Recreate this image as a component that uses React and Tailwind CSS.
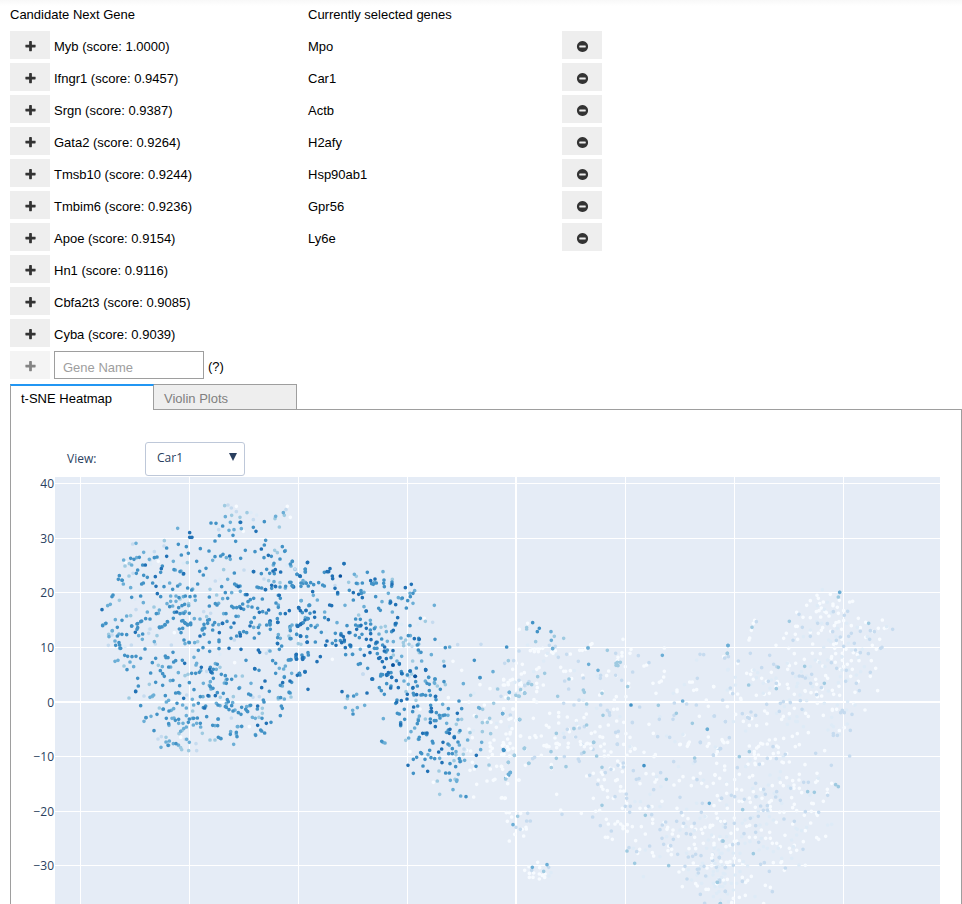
import { useState } from "react";

const CANDIDATES = [
  ["Myb", "1.0000"],
  ["Ifngr1", "0.9457"],
  ["Srgn", "0.9387"],
  ["Gata2", "0.9264"],
  ["Tmsb10", "0.9244"],
  ["Tmbim6", "0.9236"],
  ["Apoe", "0.9154"],
  ["Hn1", "0.9116"],
  ["Cbfa2t3", "0.9085"],
  ["Cyba", "0.9039"],
];

const SELECTED = ["Mpo", "Car1", "Actb", "H2afy", "Hsp90ab1", "Gpr56", "Ly6e"];

// Sequential "Blues" scale, lowest expression first.
const BLUES = ["#f7fbff", "#deebf7", "#c6dbef", "#9ecae1", "#6baed6", "#4292c6", "#2171b5", "#08519c"];

// Cells are stored in tiles. Each tile has an origin in plot units and lists of
// x,y pairs (a third of a unit each) keyed by expression level.
const TILES = [
  {
    x: 90,
    y: 490,
    levels: {
      0: "439,49 592,49 601,82 460,124 205,214 107,217",
      1: "483,68 182,222 135,328 150,300 351,265 280,220 398,104 500,75 210,275 390,268 180,416 590,225",
      2: "414,45 424,54 439,65 588,59 490,89 386,119 128,162 193,185 222,168 462,240 522,267 376,273 341,365 138,359 129,250 362,370 180,210 556,80",
      3: "404,47 471,68 425,76 450,82 568,111 555,86 583,76 223,152 292,218 105,228 117,258 401,239 360,298 122,377 192,351 296,341 562,188 570,278 88,331 554,181 118,221 350,380 380,315 536,272 270,327",
      4: "406,80 421,97 263,115 417,121 432,119 454,116 557,79 580,68 138,160 161,187 178,208 101,210 250,214 140,203 125,225 368,211 409,203 421,208 273,243 280,320 239,279 160,338 53,347 61,343 110,378 76,389 172,366 231,341 258,334 242,334 258,318 316,331 296,347 386,340 398,326 425,308 413,268 451,304 586,182 603,228 615,238 633,332 645,238 248,348 278,369 313,386 386,404 401,371 445,379 474,349 509,405 541,402 565,345 586,294 550,225 256,240 308,297 205,370 46,401 38,405 95,270 122,293 270,283 286,365 233,396 330,387 218,410 552,275 208,360 100,282 242,318 491,412 340,414 646,383 620,405 656,347 440,285",
      5: "363,99 378,100 398,108 388,137 429,136 437,154 375,153 450,97 490,112 523,95 527,151 523,165 495,185 466,181 452,205 265,163 289,170 230,174 331,176 274,195 295,190 320,214 357,183 375,200 392,198 399,193 201,201 193,203 148,202 122,205 132,208 158,225 143,240 139,250 161,256 172,262 212,247 217,228 88,257 85,268 97,271 155,282 160,279 188,279 222,290 252,239 270,245 280,252 340,255 329,244 348,235 323,282 305,300 263,288 248,298 293,294 395,290 413,325 433,249 434,282 439,287 450,288 490,245 501,291 506,293 515,294 517,327 527,299 530,238 539,250 553,251 514,251 491,325 481,329 474,335 458,342 449,350 440,353 425,349 430,353 406,308 381,345 376,341 358,321 358,348 315,318 300,320 286,318 267,323 284,343 276,347 266,353 298,370 282,370 270,371 253,367 275,393 286,400 292,403 250,385 225,405 214,411 209,413 180,387 167,386 152,395 141,402 143,413 125,408 96,391 69,315 66,320 125,322 152,318 212,320 199,371 239,350 302,404 342,403 353,391 358,389 369,405 411,394 408,371 438,379 461,358 486,351 503,355 518,365 529,369 541,393 540,405 558,339 565,352 562,386 571,371 545,295 557,290 570,291 571,325 565,316 587,289 599,277 606,287 611,291 621,253 633,289 646,245 655,288 570,207 552,220 577,170 584,184 601,222 607,214 544,199 522,203 483,397 493,383 466,314 505,412 337,417 278,415 268,417 600,410 653,386 640,280 658,345 626,354 660,370",
      6: "299,128 299,142 306,142 452,97 498,124 514,177 535,196 230,199 419,198 166,225 214,236 196,260 198,289 202,311 281,251 445,290 471,314 491,245 526,299 545,286 549,243 556,239 572,246 568,316 536,360 508,367 586,371 540,393 563,397 598,362 631,259 653,217 626,353 36,359 260,366 398,400 432,399 453,355 645,390 631,404 623,408 610,290 556,289 480,408 654,386",
    },
  },
  {
    x: 90,
    y: 620,
    levels: {
      0: "253,38 434,128 478,320 272,352",
      1: "105,80 390,103 535,95 351,158 176,28",
      2: "55,76 124,75 66,45 176,40 180,27 196,72 244,75 529,100 537,91 162,228 290,225 489,232 424,294 204,357 214,350 267,377 320,392 318,371 286,358 433,60 350,154 508,230",
      3: "56,43 66,33 201,47 102,138 178,193 117,234 285,167 294,163 205,136 390,142 407,180 457,168 208,264 187,230 323,65 276,332 272,383 275,389 296,392 360,360 375,360 337,340 267,341 507,292 517,280 597,48 603,231 308,273 391,232 430,230 92,85 565,237 409,257 455,320 228,352 517,265 625,71",
      4: "67,32 87,42 57,50 75,63 89,85 146,47 193,65 157,58 285,71 296,67 314,68 312,112 120,126 131,140 75,124 84,121 217,140 265,158 242,141 241,182 318,135 332,152 340,190 320,130 361,185 358,196 379,148 403,189 376,131 363,207 483,190 449,203 597,120 568,145 583,170 586,138 581,147 577,198 597,216 601,219 583,237 565,233 540,93 428,248 339,230 311,255 289,264 278,255 251,266 252,294 237,316 219,268 229,246 180,232 183,289 162,304 168,293 187,228 236,241 244,271 279,310 266,310 289,321 281,326 272,334 320,310 332,321 375,317 385,297 390,257 470,260 470,272 479,257 496,295 487,292 442,320 444,320 422,335 439,342 496,344 431,373 391,355 213,382 228,366 238,363 250,371 236,376 290,358 298,367 265,375 289,287 310,315 246,295 307,295 307,238 269,220 191,225 379,250 409,250 437,168 435,270 565,44 571,55 600,24",
      5: "38,17 48,10 82,22 125,18 141,28 143,11 155,3 158,42 110,44 96,43 82,48 87,68 77,76 89,75 92,85 165,87 104,106 113,109 126,110 138,109 152,115 111,149 143,175 145,198 137,213 152,257 168,293 201,283 187,128 182,159 197,187 197,115 226,108 228,113 234,113 249,97 251,126 257,122 277,121 236,141 211,152 218,161 223,169 249,181 269,197 265,218 257,219 298,188 218,196 328,157 317,160 305,160 325,91 339,83 359,94 387,86 358,67 387,60 387,65 423,55 440,48 449,38 461,35 470,38 493,54 507,40 484,7 530,15 539,8 541,28 423,22 344,24 337,30 342,43 368,30 374,8 353,10 302,9 293,15 284,8 279,2 232,5 225,14 208,21 273,38 282,60 298,68 468,121 382,133 361,142 370,148 362,155 367,159 370,175 394,163 406,167 425,178 409,190 361,200 369,205 382,218 400,220 357,228 312,209 331,230 325,250 347,258 384,255 412,239 415,245 425,257 409,262 406,260 417,269 429,273 445,278 455,262 453,283 467,268 473,275 482,256 350,290 340,263 322,294 311,295 298,297 295,307 266,298 256,301 229,295 237,273 220,267 226,227 261,250 236,311 368,316 383,317 331,310 384,297 385,352 393,356 441,350 439,337 455,319 421,343 497,346 512,330 524,339 543,307 571,287 577,265 574,258 520,240 522,246 538,214 548,122 557,130 595,120 602,119 557,160 583,172 605,187 598,218 572,233 571,196 476,222 482,225 447,205 409,190 411,178 516,295 502,267 495,147 507,151 192,332 234,376 258,371 515,333 568,88 575,78 562,70 563,53 600,56 637,115 650,50 653,26 618,112 630,165 654,98",
      6: "397,10 388,38 451,48 451,44 330,48 453,88 417,85 509,97 564,7 136,37 284,130 334,142 359,148 364,157 137,215 354,227 376,227 344,264 281,235 503,258 503,316 529,310 525,183 515,203 494,146 578,188 600,183 619,103 619,117 638,118 645,155 651,67 628,160 654,208 636,10 622,18 632,48 563,71 505,90",
    },
  },
  {
    x: 290,
    y: 550,
    levels: {
      0: "403,205 489,334 515,361 127,328",
      1: "384,222 290,237 108,245 335,223 450,280 137,115",
      2: "15,57 135,107 366,289 428,217 503,284 573,283 219,372 357,380",
      3: "176,97 199,79 307,88 273,232 406,214 341,287 340,278 310,315 33,283 206,195 461,334 286,229 388,308 368,333 357,283 365,372 347,270",
      4: "193,73 203,101 222,127 279,65 295,130 276,155 325,143 374,122 369,160 307,186 334,146 433,166 424,314 479,291 570,383 82,150 70,136 34,152 104,186 141,218 46,97 39,92 165,166 6,225 82,226 256,232 211,298 241,211 289,245 386,269 361,257 267,252 321,333 333,264 395,333 416,382 435,387 361,363 5,370 292,274 310,275 360,130 222,170 214,130 187,313 335,319 386,282 20,253 253,97",
      5: "7,34 46,57 46,66 21,73 30,78 33,99 49,100 62,98 71,104 86,98 98,105 103,108 103,67 162,41 232,67 217,99 199,100 178,121 190,150 213,122 214,130 257,140 245,101 250,103 259,99 282,90 281,100 283,110 306,96 305,109 337,144 361,140 369,130 353,152 349,174 301,153 300,160 266,175 271,181 228,183 143,132 59,166 8,108 3,97 37,188 40,218 48,182 63,227 76,232 53,206 104,203 94,247 136,250 153,251 171,227 180,248 197,207 211,208 211,228 197,225 205,228 227,220 242,222 253,236 241,240 216,253 208,263 196,256 262,277 257,281 253,295 261,295 236,289 278,285 292,300 288,306 275,267 305,245 319,220 316,225 360,227 355,257 386,265 385,300 393,307 382,285 435,268 466,293 391,205 407,359 379,354 337,371 361,363 334,365 273,373 294,374 303,368 233,355 211,341 205,343 167,314 182,290 179,285 163,275 151,272 137,272 127,280 76,276 20,253 32,259 3,266 1,242 42,323 36,315 18,322 3,329 55,315 28,371 45,365 262,311 268,325 303,323 328,343 246,387 188,313 553,331",
      6: "52,38 120,56 116,65 111,65 127,78 128,86 135,115 143,128 68,125 48,181 30,78 31,258 190,128 206,133 217,143 242,92 255,87 162,41 346,113 364,103 306,103 317,164 302,157 229,183 119,165 125,167 73,186 74,202 115,209 111,273 107,286 138,286 26,173 31,182 32,222 24,229 52,276 160,260 153,255 155,278 163,270 166,293 182,286 200,238 213,226 229,235 229,268 242,251 243,269 259,277 238,288 240,308 223,316 284,291 283,303 310,241 309,302 323,203 316,221 373,266 388,268 463,348 18,315 20,327 38,323 38,327 91,320 81,335 266,325 270,323 289,326 277,335 283,352 309,345 328,341 290,376 305,382 407,359 22,376 45,366 248,387 177,248",
      7: "151,78 309,345 375,379",
    },
  },
  {
    x: 330,
    y: 670,
    levels: {
      0: "417,96 355,83 270,117 240,245 310,337 450,44 541,31 535,44 521,30 574,12 583,8 480,56 433,137 467,152 499,172 483,157 480,219 492,210 520,218 533,207 541,187 537,148 549,117 521,132 417,177 427,203 481,230 481,243 515,254 487,254 475,262 481,297 500,289 514,289 518,298 420,301 427,277 433,297 490,331 495,328 471,333 440,343 431,381 516,383 526,384 533,341 566,330 574,45 557,152 571,198 487,235 463,105 524,45 537,238 549,235 422,243 410,241 569,44",
      1: "500,55 430,182 408,207 500,160 405,240 539,170 432,70",
      2: "99,12 513,79 585,47 402,237 597,40 541,135",
      3: "52,86 227,211 233,14 258,91 420,188 346,44 422,76 457,158 472,157 479,145 457,185 482,191 458,118 503,57 379,163 286,147 329,373 322,333 327,303 372,272 477,285 535,277 553,256 558,75 565,78 596,280 535,85 573,61 378,254 322,48 400,253 439,140 491,100 387,187 395,148 375,328 228,65",
      4: "80,73 46,113 104,106 82,113 68,121 222,33 235,43 286,33 315,27 314,40 400,41 338,103 384,149 350,160 268,138 265,208 236,204 243,185 254,174 265,147 337,137 354,136 349,187 372,202 388,225 413,210 378,245 329,265 294,254 361,331 380,334 369,359 385,313 446,113 455,217 452,239 404,271 392,378 489,5 538,67 527,325 541,307 569,149 584,235 584,69 392,273 358,226 160,146 165,219 381,330 449,115 159,217 313,38",
      5: "53,78 71,78 69,132 152,18 158,14 163,73 154,62 148,53 170,41 183,48 232,15 248,55 250,70 262,48 257,35 273,75 278,74 287,76 298,43 301,76 298,62 331,58 296,22 318,89 316,80 315,27 342,35 387,93 355,116 395,116 450,23 518,131 522,241 438,289 536,315 408,380 358,309 347,309 360,281 377,290 390,275 388,266 367,236 356,251 367,251 354,222 384,216 373,200 351,187 309,219 307,214 268,202 267,207 262,161 265,152 248,125 224,148 223,118 212,158 212,167 197,100 201,90 208,132 202,130 155,214 250,268 260,262 285,268 275,251 272,248 299,241 303,263 314,266 250,310 279,288 345,135 330,144 341,136 301,125 319,128 328,136 318,152 313,152 302,106 263,108 301,147 285,190 290,194 390,182 355,180 252,75 291,40",
      6: "36,65 111,69 126,27 170,14 175,8 185,22 199,32 205,53 182,54 215,11 240,3 287,1 249,53 232,73 231,87 214,92 260,74 251,111 305,125 301,158 316,170 278,190 291,189 304,115 293,304 234,286 326,246 335,237 339,217 360,178 358,190 373,203 382,130 439,256 336,278 212,163 317,79 200,97",
      7: "256,19",
    },
  },
  {
    x: 500,
    y: 600,
    levels: {
      0: "58,88 83,70 276,131 272,134 369,118 128,145 119,146 109,146 99,146 91,152 103,155 115,155 166,152 155,156 159,160 211,162 239,151 247,151 257,148 139,166 366,158 366,168 354,172 393,148 390,160 352,182 376,200 67,193 49,189 38,208 117,203 110,208 182,202 191,214 197,214 211,212 215,236 248,226 326,213 320,227 348,227 11,238 38,238 24,248 10,255 62,248 110,250 130,255 112,263 110,275 65,272 17,292 28,290 102,299 110,306 299,285 307,275 349,290 343,300 378,290 386,262 386,250 493,214 491,231 484,243 478,247 459,250 531,270 531,275 468,280 569,246 577,246 581,271 590,269 641,260 432,198 440,195 493,144 619,300 11,326 33,355 39,327 3,365 100,355 149,340 176,338 176,350 176,369 202,351 229,362 252,353 259,342 352,327 341,328 300,380 325,375 350,363 371,367 260,377 235,381 205,388 208,395 139,376 147,382 36,386 18,402 30,402 62,408 75,447 105,407 124,408 89,413 108,412 165,414 172,430 226,411 285,396 274,400 300,410 308,412 390,412 378,401 313,432 352,409 259,432 270,432 30,430 22,440 12,434 132,437 140,435 241,425 392,441 404,446 460,400 447,373 552,405 568,426 565,433 627,431 625,411 625,319 598,349 675,365 683,427 653,447 541,433 371,433 405,446",
      1: "83,135 131,183 142,160 101,215 45,247 223,212 292,228 520,280 553,254 683,210 590,180 480,350 500,408 549,403 646,441 525,425 50,280 170,165 250,300 75,255 230,370 390,440 260,320 360,350 290,325 640,350 190,400",
      2: "57,153 148,136 166,139 200,163 175,172 235,184 41,182 14,190 347,160 347,226 302,226 301,235 250,234 194,243 57,241 87,245 74,256 206,267 365,241 398,216 447,188 415,167 611,164 674,173 592,235 600,163 237,300 222,315 191,310 302,315 322,331 328,338 329,346 419,321 397,367 397,368 473,410 509,412 478,358 519,358 522,346 589,315 523,309 560,312 643,348 676,365 601,426 662,446 352,433 347,397 355,394 227,411 193,412 202,388 253,380 238,384 221,385 245,434 279,448",
      3: "80,83 80,87 107,125 163,109 191,115 158,145 25,182 134,220 113,230 95,254 84,251 62,269 74,280 58,289 48,286 25,295 173,289 207,237 250,270 253,277 306,280 260,312 309,346 59,358 222,386 260,375 281,427 169,400 348,190 352,187 361,187 354,197 322,151 383,260 475,316 529,340 577,370 622,387 682,160 73,446 348,196 264,143",
      4: "153,95 154,121 158,146 264,144 266,193 294,211 28,277 8,341 487,166 548,303 684,137 622,388",
      5: "98,68 118,85 112,95 20,141 393,315 10,449",
    },
  },
  {
    x: 500,
    y: 740,
    levels: {
      0: "7,17 24,30 168,11 170,23 178,14 205,10 204,22 147,20 140,20 124,46 76,76 154,74 154,86 243,14 253,20 262,10 273,25 302,19 313,33 333,36 313,48 325,47 404,27 391,34 381,46 432,37 466,44 462,50 353,63 360,72 340,88 331,85 347,122 352,119 367,95 363,80 374,76 304,97 308,103 280,100 260,108 295,120 313,119 305,140 309,148 322,152 362,140 361,153 371,153 380,190 367,205 340,175 323,172 280,175 420,131 438,101 460,102 470,118 465,126 538,122 549,110 522,135 580,114 539,14 562,19 565,11 622,19 601,100 645,106 674,90 605,130 574,137 621,140 486,184 531,205 420,205 437,205 456,200 458,238 458,250 424,260 436,282 362,252 369,259 382,254 345,252 353,245 369,266 382,274 397,260 325,252 319,238 299,211 287,214 244,220 182,210 170,163 57,120 14,175 4,174 19,218 28,218 62,220 22,244 35,231 79,267 71,288 28,303 44,283 67,268 78,262 113,367 87,380 74,391 88,400 101,399 119,383 118,402 135,402 88,412 99,412 118,417 134,412 127,406 316,292 323,292 337,298 407,302 419,328 413,340 457,338 461,348 506,318 504,332 515,328 514,344 567,326 535,289 517,282 519,270 503,262 501,268 492,248 549,259 564,236 575,260 604,268 615,262 587,268 584,292 608,280 630,262 638,256 617,230 548,226 537,396 550,388 547,440 587,431 592,438 580,369 618,448 625,448 655,418 621,384 663,365 638,365 587,326 583,313 610,310 640,290 678,320 659,297 5,80 20,110 12,43 29,48 680,160 660,180 650,70",
      1: "430,410 421,185 450,163 483,140 449,202 560,208 558,260 583,272 600,235 645,320 660,340 620,325 480,350 436,330 400,325 660,240 670,260 591,405 640,395 602,380 608,370 565,389 575,420 640,430 660,440 650,460 620,410 605,430 670,400 675,430 147,408 153,398 500,290 540,270 625,300 635,285 655,380 640,360 560,340 615,230 590,190 470,110 405,185 680,195 610,120 535,80 580,70 680,290 680,130 480,200",
      2: "238,64 235,57 193,50 98,56 104,52 245,41 352,12 354,76 370,69 370,81 333,88 316,98 269,106 293,133 400,92 409,118 417,116 482,98 521,65 641,45 654,32 601,8 585,64 591,119 461,149 540,172 445,199 455,224 376,199 391,199 389,217 380,175 379,162 345,170 278,231 186,223 301,257 334,273 80,243 91,243 48,262 61,268 83,220 146,382 95,391 387,323 410,335 449,318 480,269 487,255 497,246 486,295 491,313 520,298 512,317 530,244 551,250 544,218 572,283 559,281 583,250 604,217 607,190 665,175 662,244 676,251 533,343 565,351 578,349 587,343 603,347 638,343 592,388 597,387 595,399 617,408 658,353 638,362 561,417 555,379 612,379 676,383 659,426 676,454 601,463 614,490",
      3: "281,7 252,37 290,48 198,80 169,55 153,35 73,25 43,46 25,67 87,70 17,117 53,229 131,394 306,196 306,82 436,226 499,118 584,54 381,333 404,370 506,377 668,303 652,427 154,83 661,491 29,100",
      4: "31,98 39,254 97,382 141,374 628,190 25,103",
      5: "11,31 432,77",
    },
  },
  {
    x: 710,
    y: 580,
    levels: {
      0: "321,46 361,43 301,62 290,76 325,55 329,71 340,66 334,84 369,72 369,77 382,82 388,61 419,66 428,64 260,97 279,112 301,113 319,95 327,92 345,95 349,98 357,108 332,111 401,92 378,128 387,125 401,122 373,137 424,137 445,115 467,127 467,172 451,143 517,120 505,145 523,145 490,155 530,143 509,178 487,196 499,208 257,139 262,139 229,160 256,163 221,175 263,178 198,196 236,205 253,221 301,157 325,160 334,151 338,143 362,154 395,148 396,178 379,190 371,193 374,205 365,230 377,221 331,221 308,192 307,220 397,220 408,208 430,218 442,224 447,242 424,242 412,253 427,268 440,211 484,242 497,265 481,289 422,289 445,304 503,332 435,337 283,238 257,250 233,250 238,257 233,268 323,244 338,258 376,247 364,235 397,241 401,260 391,268 184,277 127,271 110,280 122,283 130,298 155,295 208,313 232,313 235,325 202,305 198,320 169,304 163,343 178,340 139,346 83,342 92,355 93,359 11,320 52,380 77,403 113,409 125,416 100,424 118,436 140,437 170,432 164,393 172,400 220,409 215,418 238,401 253,385 287,400 295,409 340,406 367,388 380,388 367,391 465,390 403,443 388,452 295,458 262,461 247,469 221,475 196,478 178,480 130,130 134,121 124,151 119,174 117,180 83,250 41,230 62,338 347,287 353,295 317,298 337,327 319,337 303,338 285,332 253,343 322,350 335,348 367,331 371,343 389,346 387,319 320,313 431,371 322,370 36,479 319,95 385,100 286,334",
      1: "337,29 352,67 322,77 343,88 364,98 335,130 320,125 352,130 382,145 410,130 362,185 341,202 356,180 280,170 301,150 396,230 378,170 442,142 472,170 415,190 425,210 457,208 445,232 463,260 452,275 415,270 353,240 328,247 345,260 301,260 274,275 316,240 232,250 257,290 263,310 270,345 238,360 290,362 343,370 435,375 410,390 413,365 365,412 261,410 257,424 238,415 232,433 280,440 262,425 223,380 200,400 370,440 354,450 412,432 388,463 107,453 55,268 76,292 132,270 143,278 76,315 122,313 52,330 139,293 160,310 184,300 198,294 180,325 160,340 382,375 355,333 307,320 296,295 290,288 260,320 391,290 412,300 439,285 385,308 530,140 70,425 365,435 280,390 396,270",
      2: "139,125 267,103 277,142 413,94 403,106 370,95 323,130 352,131 368,155 391,171 379,181 301,169 249,181 424,160 416,169 451,154 481,152 493,155 548,148 479,178 516,202 512,205 475,221 451,218 433,190 437,210 401,199 364,248 380,265 409,271 407,304 439,310 448,332 481,277 179,226 121,220 85,243 155,263 191,253 200,260 248,280 268,288 277,289 286,294 305,283 175,304 199,310 302,310 334,323 320,344 271,362 241,368 220,365 211,370 170,373 208,394 137,406 123,396 97,401 113,412 118,415 46,425 13,408 61,324 68,341 44,234 55,230 58,473 276,388 397,391 392,398 403,398 426,403 421,451 370,461 370,466 382,466 38,360",
      3: "389,37 238,124 126,142 52,220 284,259 343,310 205,262 116,315 199,326 476,130 385,51",
      4: "54,196 389,37",
    },
  },
  {
    x: 710,
    y: 740,
    levels: {
      0: "38,3 42,8 22,35 18,43 118,18 146,19 152,10 158,12 172,12 200,18 205,22 256,20 268,14 344,32 133,35 133,43 145,45 136,55 135,70 114,73 136,74 158,71 181,55 190,41 205,38 230,41 216,66 220,68 238,66 285,74 44,78 15,104 10,130 29,115 50,133 88,103 74,119 80,148 95,150 118,112 128,107 152,148 130,155 156,175 187,137 211,128 220,137 230,113 248,122 252,135 252,145 268,103 267,120 268,145 275,158 321,100 322,122 317,127 365,130 352,148 352,160 340,184 310,191 304,214 305,190 245,173 253,193 248,203 260,212 184,182 178,187 181,200 181,210 121,187 136,202 118,174 97,184 87,184 52,205 19,220 22,235 32,244 44,244 12,197 22,167 1,256 63,280 73,304 73,234 80,303 110,259 119,256 82,268 118,292 136,292 154,270 179,277 181,295 167,295 187,310 200,310 211,320 238,325 242,337 260,331 253,316 280,305 286,272 283,226 320,221 322,226 302,249 320,293 326,298 347,289 225,286 248,252 199,247 209,217 222,217 12,310 12,315 7,344 5,354 73,355 88,362 5,377 60,316 190,368 213,368 215,365 286,376 223,391 98,373 124,409 97,412 113,421 107,427 166,436 181,442 106,466 88,472 70,475 65,488 52,418 20,432 40,420 161,491 60,365 53,368 49,367 140,24",
      1: "120,60 107,80 180,105 211,95 128,145 175,135 143,170 160,155 193,160 202,168 235,140 215,190 175,215 145,215 178,230 190,240 170,252 150,255 127,232 105,240 97,250 154,295 160,320 147,330 120,305 105,310 95,290 30,290 25,330 55,330 36,340 70,340 90,340 15,370 36,375 22,392 50,385 9,405 25,418 35,412 64,430 15,440 27,455 53,462 70,450 31,480 55,485 10,470 113,378 100,365 267,375 245,300 260,285 275,272 258,265 290,262 250,320 190,335 172,325 215,355 205,325 353,255 365,253 300,165 325,115 208,115 220,50 38,440 45,402 75,405 90,395 80,430 135,470 262,268 245,355 13,325",
      2: "10,45 30,26 189,20 199,56 226,43 148,73 172,55 317,40 364,76 419,48 82,83 137,130 161,148 166,163 138,170 197,171 211,181 200,155 103,178 64,166 34,175 74,170 281,127 295,127 242,145 353,166 286,215 326,217 152,198 172,197 172,210 160,211 145,229 121,235 137,257 137,277 73,250 102,281 46,262 85,311 68,314 146,307 222,237 253,244 279,328 28,352 70,376 19,382 46,382 152,373 163,368 178,394 226,384 187,455 97,424 46,454 29,420 36,303",
      3: "118,35 88,50 293,155 313,157 377,134 385,140 98,209 130,341 22,427 39,303 31,491",
    },
  },
];

const X_GRID = [80, 189, 298, 407, 625, 734, 843];
const Y_GRID = [
  [483, "40"],
  [538, "30"],
  [592, "20"],
  [647, "10"],
  [702, "0"],
  [756, "−10"],
  [811, "−20"],
  [865, "−30"],
];

function PlusIcon() {
  return (
    <svg viewBox="0 0 1792 1792" className="size-[13px] fill-[#333]" aria-hidden="true">
      <path d="M1600 736v192q0 40-28 68t-68 28h-416v416q0 40-28 68t-68 28H800q-40 0-68-28t-28-68v-416H288q-40 0-68-28t-28-68V736q0-40 28-68t68-28h416V224q0-40 28-68t68-28h192q40 0 68 28t28 68v416h416q40 0 68 28t28 68z" />
    </svg>
  );
}

function MinusCircleIcon() {
  return (
    <svg viewBox="0 0 1792 1792" className="size-[13px] fill-[#333]" aria-hidden="true">
      <path d="M1344 960v-128q0-26-19-45t-45-19H512q-26 0-45 19t-19 45v128q0 26 19 45t45 19h768q26 0 45-19t19-45zm320-64q0 209-103 385.5T1281.5 1561 896 1664t-385.5-103T231 1281.5 128 896t103-385.5T510.5 231 896 128t385.5 103T1561 510.5 1664 896z" />
    </svg>
  );
}

function IconButton({ label, disabled, children }) {
  return (
    <button
      type="button"
      aria-label={label}
      disabled={disabled}
      className="flex h-7 w-10 shrink-0 items-center justify-center bg-[#eee] pt-0.5 hover:bg-gray-300 disabled:opacity-60"
    >
      {children}
    </button>
  );
}

function Points({ tile }) {
  return (
    <g transform={`translate(${tile.x} ${tile.y}) scale(0.33333)`}>
      {Object.entries(tile.levels).map(([level, points]) => (
        <path
          key={level}
          d={points
            .split(" ")
            .map((p) => `M${p.replace(",", " ")}h0.01`)
            .join("")}
          stroke={BLUES[level]}
          strokeWidth="11"
          strokeLinecap="round"
          fill="none"
        />
      ))}
    </g>
  );
}

function TsnePlot() {
  return (
    <svg viewBox="11 477 950 480" className="block w-full shrink-0 overflow-visible" role="img" aria-label="t-SNE heatmap">
      <rect x="55" y="477" width="885" height="480" fill="#e5ecf6" />
      <g fill="#fff" shapeRendering="crispEdges">
        {X_GRID.map((x) => (
          <rect key={x} x={x} y="477" width="1" height="480" />
        ))}
        <rect x="515" y="477" width="2" height="480" />
        {Y_GRID.map(([y, label]) => (
          <rect key={y} x="55" y={label === "0" ? y - 1 : y} width="885" height={label === "0" ? 2 : 1} />
        ))}
      </g>
      {TILES.map((tile) => (
        <Points key={`${tile.x}-${tile.y}`} tile={tile} />
      ))}
      <g className="fill-[#2a3f5f] text-[12px]" textAnchor="end">
        {Y_GRID.map(([y, label]) => (
          <text key={label} x="54" y={y + 5}>
            {label}
          </text>
        ))}
      </g>
    </svg>
  );
}

export default function App() {
  const [gene, setGene] = useState("Car1");

  return (
    <div className="flex h-screen flex-col overflow-hidden bg-white bg-linear-to-b from-[#f8f8f8] to-white to-[6px] pl-2.5 font-['Liberation_Sans',Arial,sans-serif] text-[13px] leading-7 text-black">
      <div className="flex items-start">
        <section className="w-[298px] shrink-0">
          <h2 className="mt-px mb-0.5">Candidate Next Gene</h2>
          <ul className="flex flex-col gap-1">
            {CANDIDATES.map(([name, score]) => (
              <li key={name} className="flex h-7 gap-1">
                <IconButton label={`Add ${name}`}>
                  <PlusIcon />
                </IconButton>
                <span className="pt-0.5">
                  {name} (score: {score})
                </span>
              </li>
            ))}
            <li className="flex h-7 gap-1">
              <IconButton label="Add gene by name" disabled>
                <PlusIcon />
              </IconButton>
              <input
                type="text"
                aria-label="Gene Name"
                placeholder="Gene Name"
                className="h-7 w-[150px] border border-[#9e9e9e] px-2 pt-1 leading-5 placeholder:text-[#9e9e9e]"
              />
              <span className="pt-0.5">(?)</span>
            </li>
          </ul>
        </section>
        <section className="w-[294px] shrink-0">
          <h2 className="mt-px mb-0.5">Currently selected genes</h2>
          <ul className="flex flex-col gap-1">
            {SELECTED.map((name) => (
              <li key={name} className="flex h-7 justify-between">
                <span className="pt-0.5">{name}</span>
                <IconButton label={`Remove ${name}`}>
                  <MinusCircleIcon />
                </IconButton>
              </li>
            ))}
          </ul>
        </section>
      </div>

      <div role="tablist" className="mt-[5px] flex h-[25px] shrink-0">
        <button
          type="button"
          role="tab"
          aria-selected="true"
          className="z-10 -mb-px flex w-36 items-center border-t-2 border-r border-l border-t-[#2196f3] border-r-[#9e9e9e] border-l-[#9e9e9e] bg-white px-2.5 pt-0.5"
        >
          t-SNE Heatmap
        </button>
        <button
          type="button"
          role="tab"
          aria-selected="false"
          className="-ml-px flex w-36 items-center border border-b-0 border-[#9e9e9e] bg-[#eee] px-2.5 pt-[3px] text-[#808080]"
        >
          Violin Plots
        </button>
      </div>

      <div
        role="tabpanel"
        className="flex min-h-0 grow flex-col overflow-hidden border border-b-0 border-[#9e9e9e] font-['Open_Sans',sans-serif] text-[#2a3f5f]"
      >
        <div className="mt-8 mb-px flex h-[34px] shrink-0 items-center pl-14 text-[12px]">
          <label htmlFor="view" className="w-[78px]">
            View:
          </label>
          <div className="relative">
            <select
              id="view"
              value={gene}
              onChange={(e) => setGene(e.target.value)}
              className="block h-[34px] w-[100px] appearance-none rounded-[3px] border border-[#bec8d9] bg-white px-[11px] pb-[3px]"
            >
              {SELECTED.map((name) => (
                <option key={name}>{name}</option>
              ))}
            </select>
            <svg viewBox="0 0 10 10" className="pointer-events-none absolute top-2.5 right-[7px] size-2.5 fill-[#2a3f5f]" aria-hidden="true">
              <path d="M1 1h8L5 9z" />
            </svg>
          </div>
        </div>
        <TsnePlot />
      </div>
    </div>
  );
}
